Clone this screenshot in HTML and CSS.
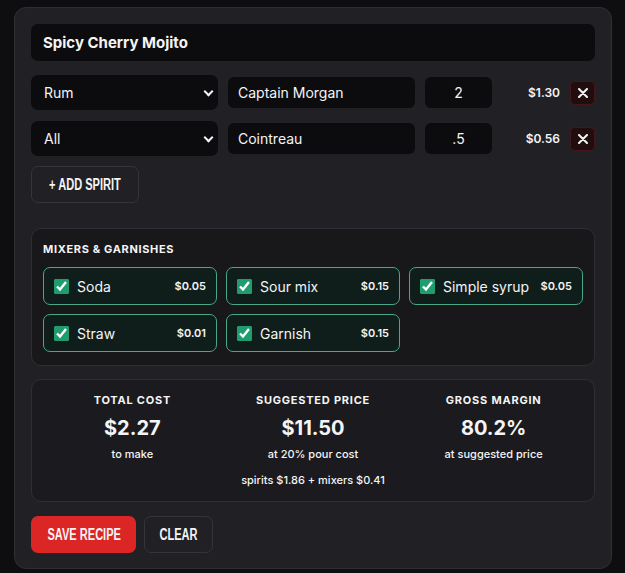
FILE: index.html
```html
<!DOCTYPE html>
<html lang="en">
<head>
    <meta charset="UTF-8">
    <meta name="viewport" content="width=device-width, initial-scale=1.0">
    <title>Cocktail Cost Builder</title>
    <link rel="stylesheet" href="styles.css">
</head>
<body>

    <div class="recipe-card">
        <input class="recipe-name" type="text" value="Spicy Cherry Mojito">

        <div class="spirit-list">
            <div class="spirit-row">
                <div class="select-wrap">
                    <select class="spirit-type">
                        <option>Rum</option>
                    </select>
                </div>
                <input class="spirit-name" type="text" value="Captain Morgan">
                <input class="spirit-qty" type="text" value="2">
                <span class="spirit-price">$1.30</span>
                <button class="remove-btn" title="Remove">
                    <svg width="10" height="10" viewBox="0 0 10 10"><path d="M1 1 L9 9 M9 1 L1 9" stroke="#f4f4f5" stroke-width="2" stroke-linecap="round"/></svg>
                </button>
            </div>
            <div class="spirit-row">
                <div class="select-wrap">
                    <select class="spirit-type">
                        <option>All</option>
                    </select>
                </div>
                <input class="spirit-name" type="text" value="Cointreau">
                <input class="spirit-qty" type="text" value=".5">
                <span class="spirit-price">$0.56</span>
                <button class="remove-btn" title="Remove">
                    <svg width="10" height="10" viewBox="0 0 10 10"><path d="M1 1 L9 9 M9 1 L1 9" stroke="#f4f4f5" stroke-width="2" stroke-linecap="round"/></svg>
                </button>
            </div>
        </div>

        <button class="ghost-btn add-spirit"><span class="btn-text">+ Add Spirit</span></button>

        <div class="mixers">
            <h3>Mixers &amp; Garnishes</h3>
            <div class="mixer-grid">
                <label class="mixer-chip"><input type="checkbox" checked><span class="mixer-name">Soda</span><span class="mixer-price">$0.05</span></label>
                <label class="mixer-chip"><input type="checkbox" checked><span class="mixer-name">Sour mix</span><span class="mixer-price">$0.15</span></label>
                <label class="mixer-chip"><input type="checkbox" checked><span class="mixer-name">Simple syrup</span><span class="mixer-price">$0.05</span></label>
                <label class="mixer-chip"><input type="checkbox" checked><span class="mixer-name">Straw</span><span class="mixer-price">$0.01</span></label>
                <label class="mixer-chip"><input type="checkbox" checked><span class="mixer-name">Garnish</span><span class="mixer-price">$0.15</span></label>
            </div>
        </div>

        <div class="summary">
            <div class="stat">
                <div class="stat-label">Total Cost</div>
                <div class="stat-value">$2.27</div>
                <div class="stat-note">to make</div>
            </div>
            <div class="stat">
                <div class="stat-label">Suggested Price</div>
                <div class="stat-value">$11.50</div>
                <div class="stat-note">at 20% pour cost</div>
                <div class="stat-breakdown">spirits $1.86 + mixers $0.41</div>
            </div>
            <div class="stat">
                <div class="stat-label">Gross Margin</div>
                <div class="stat-value">80.2%</div>
                <div class="stat-note">at suggested price</div>
            </div>
        </div>

        <div class="actions">
            <button class="save-btn"><span class="btn-text">Save Recipe</span></button>
            <button class="ghost-btn"><span class="btn-text">Clear</span></button>
        </div>
    </div>

</body>
</html>
```

FILE: styles.css
```css
/* dark cost calculator */
body {
    font-family: Inter, "Noto Sans", sans-serif;
    margin: 0;
    padding: 7px 13px 0 14px;
    background-color: #0e0e10;
    color: #f4f4f5;
}

.recipe-card {
    width: 598px;
    box-sizing: border-box;
    background-color: #202025;
    border: 1px solid #2e2e34;
    border-radius: 12px;
    padding: 16px 16px 15px 16px;
}

input, select, button {
    font-family: inherit;
    color: #f4f4f5;
}

.recipe-name {
    display: block;
    width: 100%;
    box-sizing: border-box;
    height: 37px;
    padding: 0 12px;
    background-color: #0c0c0e;
    border: none;
    border-radius: 7px;
    font-size: 15px;
    font-weight: 700;
}

.spirit-list {
    margin-top: 14px;
    display: flex;
    flex-direction: column;
    gap: 11px;
}

.spirit-row {
    display: grid;
    grid-template-columns: 187px 187px 67px 1fr 25px;
    gap: 10px;
    align-items: center;
}

.select-wrap {
    position: relative;
}

.select-wrap::after {
    content: "";
    position: absolute;
    right: 6px;
    top: 13px;
    width: 5px;
    height: 5px;
    border-right: 2px solid #f4f4f5;
    border-bottom: 2px solid #f4f4f5;
    transform: rotate(45deg);
    pointer-events: none;
}

.spirit-type {
    appearance: none;
    width: 100%;
    height: 35px;
    padding: 0 13px;
    background-color: #0c0c0e;
    border: none;
    border-radius: 7px;
    font-size: 14px;
}

.spirit-name,
.spirit-qty {
    height: 31px;
    box-sizing: border-box;
    width: 100%;
    padding: 0 10px;
    background-color: #0c0c0e;
    border: none;
    border-radius: 6px;
    font-size: 14px;
}

.spirit-qty {
    text-align: center;
}

.spirit-price {
    text-align: right;
    font-size: 12px;
    font-weight: 600;
}

.remove-btn {
    display: flex;
    align-items: center;
    justify-content: center;
    width: 25px;
    height: 24px;
    padding: 0;
    background-color: #220d0e;
    border: 1px solid #45161a;
    border-radius: 5px;
    cursor: pointer;
}

.ghost-btn,
.save-btn {
    height: 37px;
    padding: 0;
    border-radius: 7px;
    font-family: "Liberation Sans", Arial, sans-serif;
    font-weight: 700;
    font-size: 16px;
    text-transform: uppercase;
    white-space: nowrap;
    cursor: pointer;
}

/* narrow display lettering */
.btn-text {
    display: inline-block;
    transform: scaleX(0.69);
}

.ghost-btn {
    background-color: transparent;
    border: 1px solid #34343a;
}

.add-spirit {
    display: block;
    margin-top: 10px;
    width: 108px;
}

.mixers {
    margin-top: 25px;
    background-color: #18181b;
    border: 1px solid #2e2e34;
    border-radius: 10px;
    padding: 12px 11px 13px 11px;
}

.mixers h3 {
    margin: 0 0 10px 0;
    font-size: 11px;
    font-weight: 700;
    letter-spacing: 0.06em;
    text-transform: uppercase;
    line-height: 16px;
}

.mixer-grid {
    display: grid;
    grid-template-columns: repeat(3, 1fr);
    gap: 9px;
}

.mixer-chip {
    display: flex;
    align-items: center;
    height: 38px;
    box-sizing: border-box;
    padding: 0 10px 0 10px;
    background-color: #0f1e1a;
    border: 1px solid #47a883;
    border-radius: 7px;
    cursor: pointer;
}

.mixer-chip input {
    margin: 0 8px 0 0;
    width: 15px;
    height: 15px;
    accent-color: #1f9d6f;
}

.mixer-name {
    flex: 1;
    font-size: 14px;
}

.mixer-price {
    font-size: 11px;
    font-weight: 600;
}

.summary {
    margin-top: 13px;
    display: grid;
    grid-template-columns: repeat(3, 1fr);
    background-color: #1b1b1f;
    border: 1px solid #2e2e34;
    border-radius: 10px;
    padding: 13px 10px 14px 10px;
    height: 123px;
    box-sizing: border-box;
}

.stat {
    text-align: center;
}

.stat-label {
    font-size: 11px;
    font-weight: 700;
    letter-spacing: 0.07em;
    text-transform: uppercase;
    line-height: 14px;
}

.stat-value {
    margin-top: 6px;
    font-size: 20px;
    font-weight: 700;
    line-height: 30px;
}

.stat-note,
.stat-breakdown {
    margin-top: 4px;
    font-size: 11px;
    font-weight: 500;
    line-height: 14px;
}

.stat-breakdown {
    margin-top: 12px;
}

.actions {
    margin-top: 14px;
    display: flex;
    gap: 8px;
}

.save-btn {
    background-color: #dc2626;
    border: none;
    width: 105px;
}

.actions .ghost-btn {
    width: 69px;
}
```
